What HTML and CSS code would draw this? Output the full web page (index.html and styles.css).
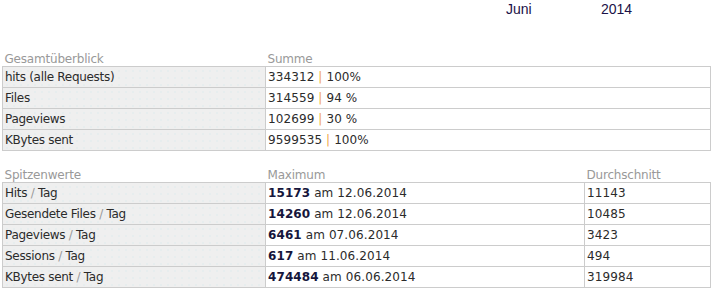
FILE: index.html
```html
<!DOCTYPE html>
<html lang="de">
<head>
<meta charset="utf-8">
<title>Statistik Juni 2014</title>
<link rel="stylesheet" href="styles.css">
</head>
<body>
<div class="period">
  <span class="month">Juni</span>
  <span class="year">2014</span>
</div>

<table class="stats overview">
  <colgroup><col class="c-label"><col></colgroup>
  <thead>
    <tr><th>Gesamtüberblick</th><th>Summe</th></tr>
  </thead>
  <tbody>
    <tr><td class="label">hits (alle Requests)</td><td>334312 <span class="sep">|</span> 100%</td></tr>
    <tr><td class="label">Files</td><td>314559 <span class="sep">|</span> 94 %</td></tr>
    <tr><td class="label">Pageviews</td><td>102699 <span class="sep">|</span> 30 %</td></tr>
    <tr><td class="label">KBytes sent</td><td>9599535 <span class="sep">|</span> 100%</td></tr>
  </tbody>
</table>

<table class="stats peaks">
  <colgroup><col class="c-label"><col class="c-max"><col></colgroup>
  <thead>
    <tr><th>Spitzenwerte</th><th>Maximum</th><th>Durchschnitt</th></tr>
  </thead>
  <tbody>
    <tr><td class="label">Hits <span class="slash">/</span> Tag</td><td><b>15173</b> am 12.06.2014</td><td>11143</td></tr>
    <tr><td class="label">Gesendete Files <span class="slash">/</span> Tag</td><td><b>14260</b> am 12.06.2014</td><td>10485</td></tr>
    <tr><td class="label">Pageviews <span class="slash">/</span> Tag</td><td><b>6461</b> am 07.06.2014</td><td>3423</td></tr>
    <tr><td class="label">Sessions <span class="slash">/</span> Tag</td><td><b>617</b> am 11.06.2014</td><td>494</td></tr>
    <tr><td class="label">KBytes sent <span class="slash">/</span> Tag</td><td><b>474484</b> am 06.06.2014</td><td>319984</td></tr>
  </tbody>
</table>
</body>
</html>
```
FILE: styles.css
```css
html, body {
  margin: 0;
  padding: 0;
  background: #fff;
}

body {
  font-family: "DejaVu Sans", Verdana, sans-serif;
  font-size: 12px;
  color: #2b2b2b;
}

.period {
  display: flex;
  height: 46px;
  padding-left: 506px;
  font-family: "Liberation Sans Narrow", "Liberation Sans", Arial, sans-serif;
  font-size: 14px;
  line-height: 16px;
  color: #1c1248;
}

.period .month {
  width: 95px;
  padding-top: 1px;
}

.period .year {
  padding-top: 1px;
}

.stats {
  border-collapse: collapse;
  table-layout: fixed;
  width: 709px;
  margin-left: 2px;
  letter-spacing: 0.1px;
}

.stats.peaks {
  margin-top: 11px;
}

.c-label { width: 263px; }
.c-max { width: 319px; }

.stats th {
  font-weight: normal;
  color: #999;
  text-align: left;
  height: 14px;
  line-height: 14px;
  padding: 6px 2px 0;
  border: 0;
  letter-spacing: -0.2px;
}

.stats td {
  height: 20px;
  line-height: 20px;
  padding: 0 2px;
  border: 1px solid #cccccc;
  white-space: nowrap;
}

.stats td.label {
  letter-spacing: -0.3px;
  background-color: #efefef;
  background-image: radial-gradient(circle, #cfe6ea 0.6px, transparent 0.9px);
  background-size: 7px 7px;
}

.sep {
  color: #f0a848;
}

.slash {
  color: #9a9a9a;
}

.stats b {
  color: #16163c;
}
```
